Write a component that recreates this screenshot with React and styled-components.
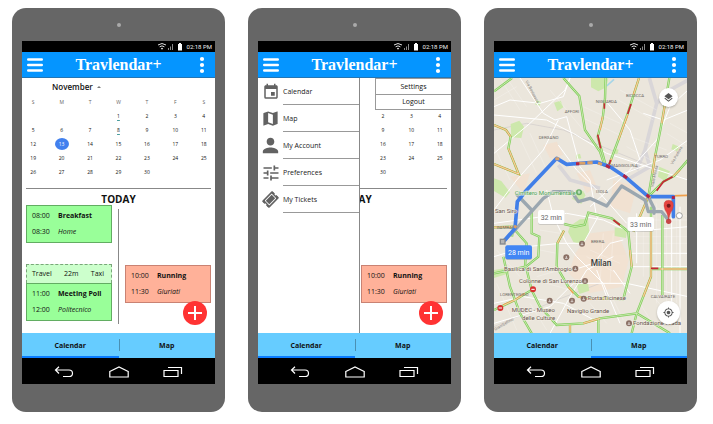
import React from "react";
import styled, { createGlobalStyle, css } from "styled-components";
import { MdEvent, MdMap, MdPerson, MdTune, MdLayers, MdGpsFixed } from "react-icons/md";
import { FaTicketAlt } from "react-icons/fa";

const GlobalStyle = createGlobalStyle`
  *, *::before, *::after { box-sizing: border-box; }
  body { margin: 0; background: #fff; color: #111; font: 7px/16px "Open Sans", "Noto Sans", sans-serif; }
  button { margin: 0; padding: 0; border: 0; background: none; color: inherit; font: inherit; cursor: pointer; }
  a { color: inherit; text-decoration: none; }
  svg { display: block; }
`;

const Showcase = styled.main`
  display: grid;
  grid-template-columns: repeat(3, minmax(0, 1fr));
  gap: 23px;
  padding: 8px 16px 12px 12px;
`;

const Phone = styled.section`
  display: flex;
  flex-direction: column;
  padding: 0 10px 28px;
  border-radius: 14px;
  background: #666;
`;

const Bezel = styled.div`
  display: grid;
  place-items: center;
  height: 33px;
`;

const Camera = styled.span`
  width: 4px;
  height: 4px;
  border-radius: 50%;
  background: #aaa;
`;

const Screen = styled.div`
  display: flex;
  flex-direction: column;
  flex: 1;
  overflow: hidden;
  background: #fff;
`;

const StatusBar = styled.div`
  display: flex;
  align-items: center;
  justify-content: flex-end;
  gap: 3px;
  height: 11px;
  padding-right: 3px;
  background: #000;
  color: #eee;
  font: 6px/11px Roboto, sans-serif;
`;

const AppBar = styled.header`
  display: flex;
  align-items: center;
  justify-content: space-between;
  height: 26px;
  padding: 0 5px;
  border-bottom: 1px solid #2476b5;
  background: #0595ff;
  color: #fff;
`;

const AppTitle = styled.h1`
  margin: 0;
  font: bold 16px/24px "Liberation Serif", serif;
`;

const IconButton = styled.button`
  display: grid;
  place-items: center;
  width: 16px;
  height: 20px;
`;

const Body = styled.div`
  position: relative;
  display: flex;
  flex-direction: column;
  min-height: 255px;
`;

const MonthButton = styled.button`
  display: flex;
  align-items: center;
  align-self: flex-start;
  gap: 4px;
  margin: 4px 0 0 30px;
  font-size: 8px;
  font-weight: 600;
  line-height: 10px;
`;

const MonthTable = styled.table`
  width: calc(100% + 6px);
  margin: 3px -3px 0;
  border-collapse: collapse;
  table-layout: fixed;
  font-size: 5px;
  line-height: 8px;
  text-align: center;

  th, td { height: 14px; padding: 0; font-weight: 400; }
  th { color: #666; }
`;

const Day = styled.span`
  display: inline-block;
  width: 14px;
  border-radius: 50%;
  ${(p) => p.$marked && css`
    text-decoration: underline;
    text-decoration-color: #4a9d9d;
    text-underline-offset: 2px;
  `}
  ${(p) => p.$selected && css`
    line-height: 12px;
    background: #4280ee;
    color: #fff;
  `}
`;

const Today = styled.h2`
  margin: 9px 4px 0;
  border-top: 1px solid #888;
  font-size: 10px;
  font-weight: 700;
  line-height: 20px;
  text-align: center;
`;

const Agenda = styled.div`
  display: grid;
  grid-template-columns: 1fr 1px 1fr;
  flex: 1;
  column-gap: 6px;
  margin: 0 4px 9px;
`;

const AgendaColumn = styled.div`
  display: flex;
  flex-direction: column;
  padding-top: ${(p) => (p.$late ? "60px" : "0")};
  margin-top: -4px;
`;

const Divider = styled.div`
  background: #888;
`;

const EventCard = styled.article`
  display: grid;
  grid-template-columns: 26px 1fr;
  align-content: center;
  height: 38px;
  padding-left: 5px;
  border: 1px solid ${(p) => (p.$tone === "red" ? "#c98273" : "#62ad62")};
  background: ${(p) => (p.$tone === "red" ? "#ffb199" : "#99ff99")};
`;

const Travel = styled.div`
  display: flex;
  justify-content: space-between;
  margin-top: 21px;
  padding: 1px 7px 1px 5px;
  border: 1px dashed #79a679;
  border-bottom: 0;
  background: #ccffcc;
`;

const AddButton = styled.button`
  position: absolute;
  right: 8px;
  bottom: 8px;
  display: grid;
  place-items: center;
  width: 24px;
  height: 24px;
  border-radius: 50%;
  background: #ff3333;
`;

const Drawer = styled.nav`
  position: absolute;
  inset: 0 auto 0 0;
  width: 102px;
  border-right: 1px solid #888;
  background: #fff;
`;

const DrawerItem = styled.a`
  display: grid;
  grid-template-columns: 25px 1fr;
  align-items: center;
  height: 27px;
  color: #222;

  svg { justify-self: center; color: #626262; }
`;

const DrawerLabel = styled.span`
  display: flex;
  align-items: center;
  height: 27px;
  padding-top: 2px;
  border-bottom: 1px solid #999;
`;

const OverflowMenu = styled.div`
  position: absolute;
  top: 0;
  right: 0;
  width: 76px;
  border: 1px solid #999;
  border-right: 0;
  background: #fff;
`;

const MenuItem = styled.button`
  display: block;
  width: 100%;
  height: 15px;
  line-height: 14px;
  & + & { border-top: 1px solid #999; }
`;

const Tabs = styled.nav`
  position: relative;
  display: grid;
  grid-template-columns: 1fr 1fr;
  background: #66ccff;
`;

const Tab = styled.a`
  height: 25px;
  border-bottom: 2px solid ${(p) => (p.$active ? "#0a7cff" : "#66ccff")};
  font-weight: 700;
  line-height: 25px;
  text-align: center;
`;

const TabDivider = styled.span`
  position: absolute;
  top: 6px;
  bottom: 7px;
  left: 50%;
  width: 1px;
  background: #4a90b3;
`;

const SystemBar = styled.div`
  display: flex;
  align-items: center;
  justify-content: space-between;
  height: 26px;
  padding: 2px 32px 0;
  background: #000;
`;

const SystemButton = styled.button`
  display: grid;
  place-items: center;
  width: 20px;
  height: 16px;
`;

const MapCanvas = styled.svg`
  position: absolute;
  inset: 0;
  width: 100%;
  height: 100%;
  background: #ebe6dc;
  font-family: Roboto, sans-serif;
`;

const MapButton = styled.button`
  position: absolute;
  right: ${(p) => (p.$low ? "7px" : "9px")};
  ${(p) => (p.$low ? "bottom: 9px;" : "top: 10px;")}
  display: grid;
  place-items: center;
  width: ${(p) => (p.$low ? "23px" : "19px")};
  height: ${(p) => (p.$low ? "23px" : "19px")};
  border-radius: 50%;
  background: #fff;
  color: #555;
  box-shadow: 0 1px 2px rgba(0, 0, 0, 0.25);
`;

const weeks = [
  ["", "", "", 1, 2, 3, 4],
  [5, 6, 7, 8, 9, 10, 11],
  [12, 13, 14, 15, 16, 17, 18],
  [19, 20, 21, 22, 23, 24, 25],
  [26, 27, 28, 29, 30, "", ""],
];

const drawerItems = [
  { label: "Calendar", icon: <MdEvent size={18} /> },
  { label: "Map", icon: <MdMap size={19} /> },
  { label: "My Account", icon: <MdPerson size={23} /> },
  { label: "Preferences", icon: <MdTune size={20} /> },
  { label: "My Tickets", icon: <FaTicketAlt size={15} transform="rotate(-45)" /> },
];

function StatusIcons() {
  return (
    <svg width="26" height="9" viewBox="0 0 26 9" fill="none" stroke="#ddd" aria-hidden="true">
      <path d="M0 3Q4 0 8 3M1.600 4.800Q4 3 6.400 4.800" />
      <path d="M2.800 6.200Q4 5.300 5.200 6.200L4 7.700z" fill="#ddd" stroke="none" />
      <path d="M10.500 6v2M12.500 4.500V8M14.500 2v6" stroke="#999" strokeWidth=".9" />
      <path d="M20 2h1V1h2v1h1v6.500h-4z" fill="#fff" stroke="none" />
    </svg>
  );
}

function PhoneFrame({ name, active, children }) {
  return (
    <Phone aria-label={name}>
      <Bezel><Camera /></Bezel>
      <Screen>
        <StatusBar><StatusIcons />02:18 PM</StatusBar>
        <AppBar>
          <IconButton aria-label="Open menu">
            <svg width="16" height="14" viewBox="0 0 16 14" stroke="#fff" strokeWidth="2.400" strokeLinecap="round">
              <path d="M1.200 1.500h13.600M1.200 7h13.600M1.200 12.500h13.600" />
            </svg>
          </IconButton>
          <AppTitle>Travlendar+</AppTitle>
          <IconButton aria-label="More options">
            <svg width="6" height="18" viewBox="0 0 6 18" fill="#fff">
              <circle cx="3" cy="3" r="2.100" /><circle cx="3" cy="9" r="2.100" /><circle cx="3" cy="15" r="2.100" />
            </svg>
          </IconButton>
        </AppBar>
        <Body>{children}</Body>
        <Tabs>
          <Tab href="#calendar" $active={active === "calendar"}>Calendar</Tab>
          <Tab href="#map" $active={active === "map"}>Map</Tab>
          <TabDivider />
        </Tabs>
        <SystemBar>
          <SystemButton aria-label="Back">
            <svg width="20" height="12" viewBox="0 0 20 12" fill="none" stroke="#fff" strokeWidth="1.200">
              <path d="M5 .8L1.500 4L5 7.500M1.500 4H15q3.500 0 3.500 3.300T15 10.500H9" />
            </svg>
          </SystemButton>
          <SystemButton aria-label="Home">
            <svg width="20" height="12" viewBox="0 0 20 12" fill="none" stroke="#fff" strokeWidth="1.200">
              <path d="M.8 5.500L10 1l9.200 4.500M.8 5v6h18.400V5" />
            </svg>
          </SystemButton>
          <SystemButton aria-label="Recent apps">
            <svg width="20" height="12" viewBox="0 0 20 12" fill="none" stroke="#fff" strokeWidth="1.200">
              <path d="M1 4.500h14v6H1zM5 1.500h13.500V8" />
            </svg>
          </SystemButton>
        </SystemBar>
      </Screen>
    </Phone>
  );
}

function Event({ tone, start, end, title, place }) {
  return (
    <EventCard $tone={tone}>
      <time>{start}</time><strong>{title}</strong>
      <time>{end}</time><em>{place}</em>
    </EventCard>
  );
}

function CalendarView() {
  return (
    <>
      <MonthButton>
        November
        <svg width="4" height="3" viewBox="0 0 4 3" fill="#777"><path d="M0 2L2 0l2 2z" /></svg>
      </MonthButton>
      <MonthTable aria-label="November">
        <thead>
          <tr>{["S", "M", "T", "W", "T", "F", "S"].map((d, i) => <th key={i} scope="col">{d}</th>)}</tr>
        </thead>
        <tbody>
          {weeks.map((week, w) => (
            <tr key={w}>
              {week.map((d, i) => (
                <td key={i}><Day $selected={d === 13} $marked={d === 1 || d === 8}>{d}</Day></td>
              ))}
            </tr>
          ))}
        </tbody>
      </MonthTable>
      <Today>TODAY</Today>
      <Agenda>
        <AgendaColumn>
          <Event tone="green" start="08:00" end="08:30" title="Breakfast" place="Home" />
          <Travel><span>Travel</span><span>22m</span><span>Taxi</span></Travel>
          <Event tone="green" start="11:00" end="12:00" title="Meeting Poli" place="Politecnico" />
        </AgendaColumn>
        <Divider />
        <AgendaColumn $late>
          <Event tone="red" start="10:00" end="11:30" title="Running" place="Giuriati" />
        </AgendaColumn>
      </Agenda>
      <AddButton aria-label="Add event">
        <svg width="14" height="14" viewBox="0 0 14 14" stroke="#fff" strokeWidth="2"><path d="M7 0v14M0 7h14" /></svg>
      </AddButton>
    </>
  );
}

const parks = [
  "M303 24h52l-6 28-24 12-22-12z", "M192 98l20-6 8 20-18 12z", "M62 162l26-10 14 18-8 34-30-2z",
  "M12 325l22 8 26 34-14 16-34-20z", "M258 360q24-2 28 16l-12 26-28-16z", "M240 468l30-20 24-2 4 40-18 40-30-10-16-30z",
  "M374 472l38 6-4 26-34-6z", "M258 640l34-12 6 34-30 10z", "M508 290l32 14-14 30-22-14z",
  "M140 90l14 6-6 12-14-6z", "M258 255l12-4 4 14-14 2z", "M548 222l20 8-6 14-18-6z", "M12 600l36-6 10 16-46 14z", "M372 235l14 4-4 14-14-4z",
];

const streets = [
  "M90 24L160 130L195 150L230 140L270 290L300 330L320 440", "M12 135L170 150L250 190L350 250L594 330",
  "M12 250L120 160L225 60L240 24", "M12 420L80 330L160 240L205 150", "M205 225L260 300L330 370L410 460",
  "M170 360L190 440L230 520L260 560L340 640L390 760", "M350 24L345 90L420 180L450 270",
  "M594 60L540 110L500 210L410 310L300 410", "M180 790L240 680L290 600L370 560", "M594 470L420 485L340 450L230 430L12 460",
  "M12 560L110 530L210 520L280 520L330 430", "M420 550H594M425 590H594M485 420V620M545 400V700M570 410V790M440 430V580",
  "M12 700L100 680L220 700L330 760", "M12 760L180 710L250 640L410 640L594 680", "M240 24L220 80L150 100L60 90L12 110",
  "M350 330L430 300L510 270L594 210", "M460 130L520 150L594 120", "M310 580L360 520L400 510M310 580L250 600M320 600L350 680M370 600L420 670",
];

const traffic = [
  "M12 64L66 24", "M220 24L268 78L285 180L330 245L345 290", "M347 24L345 85L338 145L323 200L340 260L348 290",
  "M447 24L415 125L385 210L355 290", "M538 24L515 160L495 260L475 380", "M12 165L48 180L62 200L55 235L86 312L12 282",
  "M475 380L520 335L552 318L594 270", "M200 590L235 650L265 680L295 685L400 687L425 590L415 485L365 445L295 428L284 464L255 470L222 462",
  "M222 482L202 520L200 590", "M483 410V620L440 730L330 745L280 760L200 765L150 710L125 660L108 590L145 560L148 500L125 490V420",
  "M517 435V675", "M594 597H483", "M440 730L540 790", "M12 472L70 470L66 500", "M40 560L60 650L90 730L125 790",
  "M12 720L75 690L125 660", "M240 765V790M325 748V790M440 730L425 790", "M475 380L430 485", "M108 590L12 610", "M66 470L110 520L105 590",
];

const jams = [
  "M12 165L48 180L62 200M55 235L86 312L12 282", "M338 140L330 180", "M447 24L430 75M413 135L385 210M365 265L355 290",
  "M530 75L515 160M497 250L487 310", "M265 680L295 687L350 686M425 590L420 540", "M222 482L202 520M235 650L250 670",
  "M483 450V620L460 680", "M594 597H510", "M12 472L70 470M40 705L75 690L105 670", "M475 380L430 485M475 380L594 376",
  "M280 760L330 745M240 765V785", "M550 318L570 300",
];

const districts = [
  [317, 100, "NIGUARDA"], [408, 80, "BICOCCA"], [224, 129, "AFFORI"], [146, 206, "DERGANO"], [364, 290, "MAGGIOLINA"],
  [318, 369, "ISOLA"], [493, 263, "TURRO"], [303, 518, "BRERA"], [20, 476, "GAMBARA"], [30, 679, "LORENTEGGIO"], [482, 684, "CALVAIRATE"],
];

const places = [
  [42, 602, "Basilica di Sant'Ambrogio"], [87, 639, "Colonne di San Lorenzo"], [293, 691, "Porta Ticinese"],
  [65, 727, "MUDEC - Museo"], [96, 751, "delle Culture"], [231, 728, "Naviglio Grande"], [429, 765, "Fondazione Prada"], [15, 428, "San Siro"],
];

const pins = [[276, 521], [229, 562], [256, 596], [285, 633], [281, 686], [179, 692], [246, 692], [417, 760]];

function TimeTag({ x, y, selected, children }) {
  return (
    <g>
      <rect x={x} y={y + 2} width="80" height="42" rx="6" fill="#999" opacity=".5" />
      <rect x={x} y={y} width="80" height="42" rx="6" fill={selected ? "#4286f4" : "#fff"} />
      <text x={x + 40} y={y + 29} fontSize="21" textAnchor="middle" fill={selected ? "#fff" : "#666"}>{children}</text>
    </g>
  );
}

function MapView() {
  return (
    <>
      <MapCanvas viewBox="12 24 579 765" preserveAspectRatio="xMidYMid slice" fill="none" role="img" aria-label="Routes across Milan">
        <g fill="#f6dfcb" opacity=".6">
          <path d="M300 490l80-10 36 90-20 80-100 20-60-60 20-60z" />
          <path d="M160 225l40-10 20 40-40 10zM60 320l60-10-20 60zM370 330l70 20-20 80-60-20zM260 310l40-10 20 50-30 20z" />
        </g>
        <path d="M478 24L500 100L465 240L480 290L410 330M500 100L540 60L594 30M205 285L240 330L330 355M465 240L440 300" stroke="#d9d6d8" strokeWidth="11" />
        <path d="M12 180L110 160L220 180L350 235L560 320M12 770L200 690L330 640" stroke="#d0cccc" strokeWidth="2" />
        {parks.map((d) => <path key={d} d={d} fill="#cde8ac" />)}
        <path d="M350 48L372 28" stroke="#a6d5e8" strokeWidth="5" />
        <g stroke="#fff" strokeWidth="3">{streets.map((d) => <path key={d} d={d} />)}</g>
        <g stroke="#fff" strokeWidth="1" opacity=".7">
          <path d="M30 24L90 120M50 24L110 110M12 90L80 50M12 230L60 330M120 190L170 300M90 205L140 310M180 60L280 180M280 110L390 160M270 140L400 200M390 60L500 120M385 90L490 150M420 200L530 240M410 230L500 280M540 160L594 190M530 190L594 230M450 400L594 440M450 450H594M430 500H594M430 520H594M500 400V700M530 400V700M560 400V700M460 430V620M300 540L390 580M290 560L380 610M340 490L330 640M370 490L360 640M30 500L120 580M20 540L90 620M150 480L210 490M150 540L200 550M140 620L210 600M170 640L240 660M300 700L350 760M370 690L400 750M450 700L500 780M490 680L560 760M20 640L80 780M120 700L170 780" />
        </g>
        <g stroke="#7fcf58" strokeWidth="7">{traffic.map((d) => <path key={d} d={d} />)}</g>
        <g stroke="#f0a04c" strokeWidth="5">{jams.map((d) => <path key={d} d={d} />)}</g>
        <g stroke="#eef0dc" strokeWidth="2">{traffic.map((d) => <path key={d} d={d} />)}</g>
        <path d="M343 100V116M323 194L332 235M423 102L413 132M362 270L355 290M500 362L520 335L548 320M370 450L390 465M483 595h22" stroke="#c62836" strokeWidth="5" />

        <g fontSize="13" fill="#6b6763">{districts.map(([x, y, t]) => <text key={t} x={x} y={y}>{t}</text>)}</g>
        <g fontSize="12" fill="#7d7a78">
          <text transform="translate(106 34) rotate(62)">Via Bovisasca</text>
          <text transform="translate(490 352) rotate(-78)">Viale Monza</text>
          <text transform="translate(548 284) rotate(-60)">Via Padova</text>
          <text transform="translate(16 782) rotate(-30)">Giambellino</text>
        </g>

        <g strokeLinejoin="round" strokeLinecap="round" strokeWidth="10">
          <path d="M38 515L75 480L160 385L190 365L245 365L265 395L300 385L350 408L395 348L465 390L475 425L515 425L535 450M82 375L125 420M475 380L492 415V430" stroke="#9ba7b0" />
          <path d="M45 510L75 475L82 395L110 360L200 265L230 283L320 276L360 290L405 320L475 380H550V440" stroke="#417fe8" strokeWidth="11" />
        </g>
        <path d="M196 266h12M262 280h24M292 278h16M324 279l12 4M470 376l12 8M74 474l4-8" stroke="#d9a068" strokeWidth="9" />
        <path d="M258 281h10M348 286l12 7M400 316l11 8M470 374l8 8M550 378v9" stroke="#b32446" strokeWidth="9" />
        <rect x="31" y="508" width="14" height="14" fill="#b5b5b5" stroke="#85888d" strokeWidth="4" />

        <g fontSize="18" fill="#66534b" stroke="#f4efe6" strokeWidth="3" paintOrder="stroke">
          {places.map(([x, y, t]) => <text key={t} x={x} y={y}>{t}</text>)}
        </g>
        <text x="74" y="374" fontSize="18" fill="#4c9b58" stroke="#eef3e2" strokeWidth="3" paintOrder="stroke">Cimitero Monumentale</text>
        <circle cx="267" cy="367" r="9" fill="#69ad69" />
        <path d="M267 361v11M263 366h8" stroke="#fff" strokeWidth="2" />
        <text x="302" y="587" fontSize="25" fontWeight="500" fill="#383838" stroke="#f3ebdf" strokeWidth="3" paintOrder="stroke">Milan</text>
        {pins.map(([x, y]) => (
          <g key={`${x}-${y}`}>
            <circle cx={x} cy={y} r="9" fill="#8b7065" />
            <path d={`M${x - 4} ${y + 3}h8M${x} ${y - 4}v6`} stroke="#fff" strokeWidth="2" />
          </g>
        ))}
        {[[129, 658], [31, 714]].map(([x, y]) => (
          <g key={x}>
            <circle cx={x} cy={y} r="9" fill="#d93030" />
            <path d={`M${x - 5} ${y}h10`} stroke="#fff" strokeWidth="3" />
          </g>
        ))}
        <TimeTag x={144} y={420}>32 min</TimeTag>
        <TimeTag x={412} y={441}>33 min</TimeTag>
        <TimeTag x={46} y={526} selected>28 min</TimeTag>
        <circle cx="568" cy="437" r="9" fill="#fff" stroke="#777" strokeWidth="2" />
        <circle cx="536" cy="454" r="8" fill="#c64747" />
        <path d="M536 450Q533 430 525 420Q515 391 536 391Q557 391 547 420Q539 430 536 450z" fill="#e54440" stroke="#b83434" strokeWidth="1" />
        <circle cx="536" cy="407" r="6" fill="#77191c" />
      </MapCanvas>
      <MapButton aria-label="Map layers"><MdLayers size={11} /></MapButton>
      <MapButton $low aria-label="My location"><MdGpsFixed size={11} /></MapButton>
    </>
  );
}

export default function App() {
  return (
    <>
      <GlobalStyle />
      <Showcase>
        <PhoneFrame name="Calendar screen" active="calendar">
          <CalendarView />
        </PhoneFrame>
        <PhoneFrame name="Menus screen" active="calendar">
          <CalendarView />
          <Drawer aria-label="Main menu">
            {drawerItems.map(({ label, icon }) => (
              <DrawerItem key={label} href="#menu">{icon}<DrawerLabel>{label}</DrawerLabel></DrawerItem>
            ))}
          </Drawer>
          <OverflowMenu>
            <MenuItem>Settings</MenuItem>
            <MenuItem>Logout</MenuItem>
          </OverflowMenu>
        </PhoneFrame>
        <PhoneFrame name="Map screen" active="map">
          <MapView />
        </PhoneFrame>
      </Showcase>
    </>
  );
}
